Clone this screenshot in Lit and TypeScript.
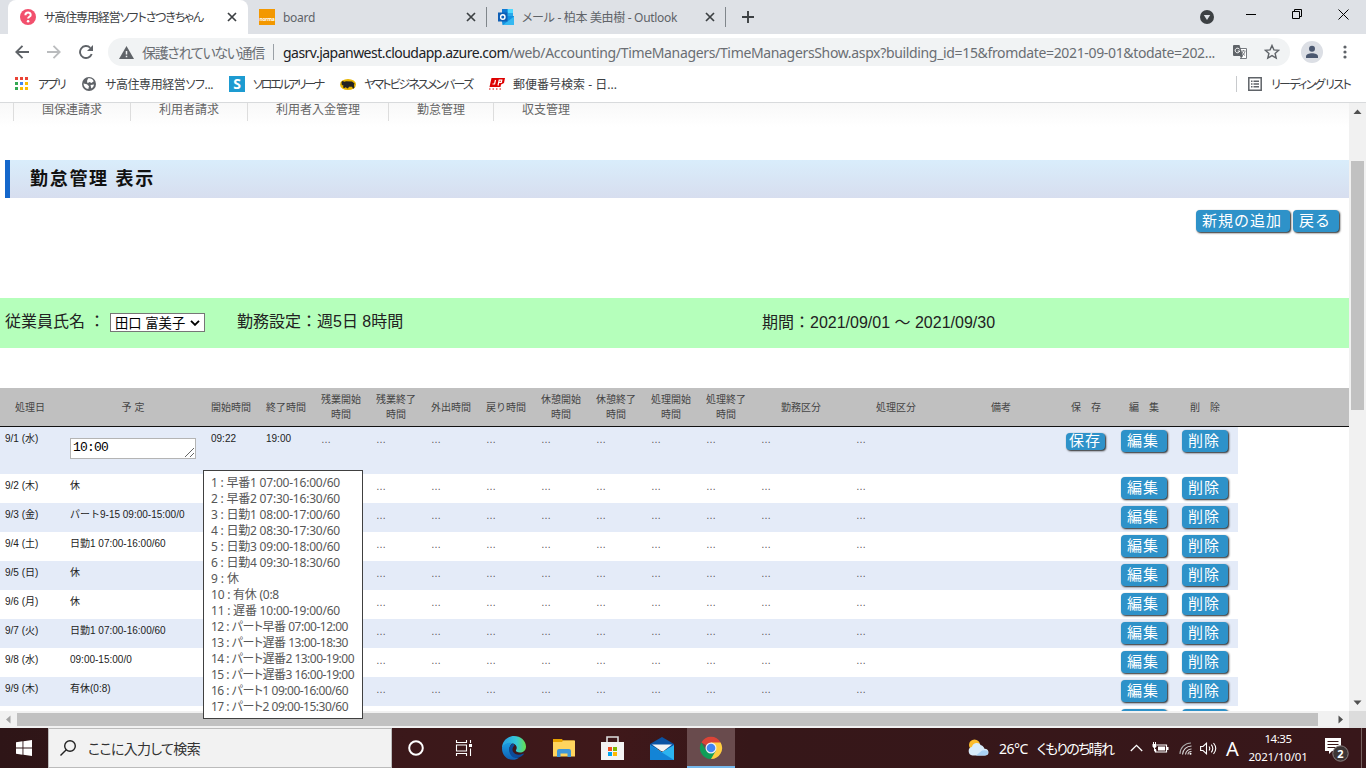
import { css, html, LitElement, svg } from "lit";
import { customElement, property } from "lit/decorators.js";
import { classMap } from "lit/directives/class-map.js";

// Spreads its text over a given width by adjusting the letter spacing.
@customElement("fit-text")
class FitTextElement extends LitElement {
    @property({ type: Number })
    width = 0;

    firstUpdated() {
        const run = this.renderRoot.querySelector(".run")!;
        const natural = run.getBoundingClientRect().width;
        const count = [...(this.textContent ?? "")].length;
        this.style.letterSpacing = `${(this.width - natural) / count}px`;
    }

    render() {
        return html`<span class="run"><slot></slot></span>`;
    }

    static styles = css`
    :host {
        display: inline-block;
        white-space: pre;
        font-feature-settings: "palt";
    }
  `;
}

const closeIcon = html`<svg class="close" width="10" height="10" viewBox="0 0 10 10">
    <path d="M1 1l8 8M9 1l-8 8" stroke="#3c4043" stroke-width="1.7" />
</svg>`;

@customElement("browser-chrome")
class BrowserChromeElement extends LitElement {
    render() {
        return html`
      <div class="tabs">
        <div class="tab active">
            <svg class="favicon" width="16" height="16" viewBox="0 0 16 16">
                <circle cx="8" cy="8" r="8" fill="#f2506d" />
                <path d="M5.4 6.2c0-3.6 5.4-3.4 5.3-.3 0 1.9-2.6 1.9-2.6 3.7" fill="none" stroke="#fff" stroke-width="2" />
                <circle cx="8.1" cy="12.2" r="1.3" fill="#fff" />
            </svg>
            <fit-text class="title dark" width="159">サ高住専用経営ソフトさつきちゃん</fit-text>
            ${closeIcon}
        </div>
        <div class="tab">
            <span class="favicon norma">norma</span>
            <fit-text class="title" width="32">board</fit-text>
            ${closeIcon}
        </div>
        <div class="tab">
            <svg class="favicon" width="16" height="16" viewBox="0 0 16 16">
                <path d="M4 0h11v8H4z" fill="#28a8ea" />
                <path d="M9.5 0H15v4H9.5z" fill="#50d9ff" />
                <path d="M4 0h5.5v4H4z" fill="#0f78d4" />
                <path d="M3 7l13 0v9H4.5z" fill="#1490df" />
                <path d="M16 7.5v8.5H5z" fill="#35b8f1" />
                <path d="M0 3.5h9.5v9H0z" fill="#0f5fb5" />
                <circle cx="4.8" cy="8" r="2.2" fill="none" stroke="#fff" stroke-width="1.4" />
            </svg>
            <fit-text class="title" width="155">メール - 柏本 美由樹 - Outlook</fit-text>
            ${closeIcon}
        </div>
        <svg class="plus" width="12" height="12" viewBox="0 0 12 12">
            <path d="M6 0v12M0 6h12" stroke="#3c4043" stroke-width="1.9" />
        </svg>
        <div class="window">
            <svg width="14" height="14" viewBox="0 0 14 14">
                <circle cx="7" cy="7" r="7" fill="#3c4043" />
                <path d="M3.8 5h6.4L7 10z" fill="#dee1e6" />
            </svg>
            <svg class="minimize" width="10" height="10" viewBox="0 0 10 10"><path d="M0 5.5h10" stroke="#000" /></svg>
            <svg class="restore" width="10" height="10" viewBox="0 0 10 10" fill="none" stroke="#000">
                <path d="M.5 2.500h7v7h-7zM2.5 2.500v-2h7v7h-2" />
            </svg>
            <svg class="quit" width="11" height="11" viewBox="0 0 11 11"><path d="M.5.5l10 10M10.5.5l-10 10" stroke="#000" /></svg>
        </div>
      </div>
      <div class="toolbar">
        <svg class="back" width="14" height="14" viewBox="0 0 14 14" fill="none" stroke="#5f6368" stroke-width="1.9">
            <path d="M14 7H1.5M7.5.8L1.3 7l6.2 6.2" />
        </svg>
        <svg class="forward" width="14" height="14" viewBox="0 0 14 14" fill="none" stroke="#babcbe" stroke-width="1.8">
            <path d="M0 7h12.5M6.5.8L12.7 7l-6.2 6.2" />
        </svg>
        <svg class="reload" width="14" height="14" viewBox="0 0 14 14">
            <path d="M12.7 9A6 6 0 1 1 11.3 2.800" fill="none" stroke="#5f6368" stroke-width="1.9" />
            <path d="M14 0v6H8z" fill="#5f6368" />
        </svg>
        <div class="omnibox">
            <svg class="warning" width="15" height="13" viewBox="0 0 15 13">
                <path d="M7.5 0L15 13H0z" fill="#5f6368" />
                <path d="M7.5 5v3.500M7.5 9.700v1.600" stroke="#f1f3f4" stroke-width="1.5" />
            </svg>
            <fit-text class="insecure" width="122">保護されていない通信</fit-text>
            <span class="divider"></span>
            <div class="url"><fit-text class="host" width="226">gasrv.japanwest.cloudapp.azure.com</fit-text><fit-text width="706">/web/Accounting/TimeManagers/TimeManagersShow.aspx?building_id=15&amp;fromdate=2021-09-01&amp;todate=202...</fit-text></div>
            <svg class="translate" width="14" height="14" viewBox="0 0 14 14">
                <path d="M7 3.500h6.500v10H7" fill="#fff" stroke="#777b80" />
                <path d="M1 0h5.500L10 11H1a1 1 0 0 1-1-1V1a1 1 0 0 1 1-1z" fill="#5f6368" />
                <path d="M6.500 4.400A2.300 2.300 0 1 0 6.700 6H4.700" fill="none" stroke="#fff" stroke-width="1" />
                <path d="M8.500 6h4M10.500 5v1M9 6.500q1 3 3 4M12 6.500q-.6 2.500-2.500 4" fill="none" stroke="#777b80" stroke-width=".9" />
                <path d="M7 11h3l-2 2.500z" fill="#5f6368" />
            </svg>
            <svg class="star" width="16" height="16" viewBox="0 0 16 16">
                <path d="M8 1.500l1.900 4.400 4.800.4-3.600 3.100 1.100 4.700L8 11.600l-4.200 2.500 1.100-4.700-3.600-3.100 4.800-.4z" fill="none" stroke="#5f6368" stroke-width="1.4" />
            </svg>
        </div>
        <svg class="avatar" width="22" height="22" viewBox="0 0 22 22">
            <circle cx="11" cy="11" r="11" fill="#dcdfe5" />
            <circle cx="11" cy="7.8" r="3" fill="#4b5870" />
            <path d="M5 17v-1.500c0-4.200 12-4.200 12 0V17z" fill="#4b5870" />
        </svg>
        <svg class="menu" width="4" height="14" viewBox="0 0 4 14" fill="#5f6368">
            <circle cx="2" cy="2" r="1.6" /><circle cx="2" cy="7" r="1.6" /><circle cx="2" cy="12" r="1.6" />
        </svg>
      </div>
      <div class="bookmarks">
        <svg width="14" height="14" viewBox="0 0 14 14">
            <path d="M0 0h3v3H0zM5 0h3v3H5zM10 0h3v3h-3z" fill="#ea4335" />
            <path d="M0 5h3v3H0zM0 10h3v3H0z" fill="#34a853" />
            <path d="M5 5h3v3H5z" fill="#4285f4" />
            <path d="M10 5h3v3h-3zM5 10h3v3H5zM10 10h3v3h-3z" fill="#fbbc04" />
        </svg>
        <fit-text class="m9" width="27">アプリ</fit-text>
        <svg class="globe" width="14" height="14" viewBox="0 0 14 14">
            <circle cx="7" cy="7" r="7" fill="#5f6368" />
            <path d="M1.500 6.500l3.500.8 2 2-.7 2.700C3.500 11.700 1.500 9.500 1.500 6.500zM6 1.500c2.500-.6 4.800.6 5.700 2.700L9.500 6 7.500 5 5.500 6.200 5 4zM8.500 8l3.500-.5c-.2 1.800-1.200 3.300-2.700 4z" fill="#fff" />
        </svg>
        <fit-text class="m9" width="108">サ高住専用経営ソフ...</fit-text>
        <span class="soloel">S</span>
        <fit-text class="m8" width="70">ソロエルアリーナ</fit-text>
        <svg class="yamato" width="16" height="11" viewBox="0 0 16 11">
            <ellipse cx="8" cy="5.5" rx="8" ry="5.5" fill="#e8b500" />
            <path d="M1.500 3l1-1 2 .8L6 2.200l6 .2 2.600 2-.6 1.600.4 3-1.400.8-1-2H9L8 9.500l-1.500-.4-.5-1L4.500 9 3 8.500l.5-2L1.800 6z" fill="#222" />
        </svg>
        <fit-text class="m8" width="108">ヤマトビジネスメンバーズ</fit-text>
        <svg class="jp" width="16" height="12" viewBox="0 0 16 12">
            <path d="M2.500 0H16l-1 5-3 1.600-.5 2.400H.5z" fill="#d00" />
            <path d="M6.500 2L5.600 6H3.500M9 7.500l1.200-5.300h2.600l-.5 2.200H10" fill="none" stroke="#fff" stroke-width="1.2" />
            <path d="M0 11h14" stroke="#d00" stroke-dasharray="1.5 2" />
        </svg>
        <fit-text class="m8" width="104">郵便番号検索 - 日...</fit-text>
        <span class="bar"></span>
        <svg class="list" width="14" height="14" viewBox="0 0 14 14">
            <path d="M.8.8h12.400v12.400H.8z" fill="none" stroke="#5f6368" stroke-width="1.5" />
            <path d="M3 4.300h1.500M5.500 4.300H11M3 7h1.500M5.500 7H11M3 9.700h1.500M5.500 9.700H11" stroke="#5f6368" stroke-width="1.4" />
        </svg>
        <fit-text class="m9" width="79">リーディング リスト</fit-text>
      </div>
    `;
    }

    static styles = css`
    :host {
        display: block;
        height: 103px;
        font: 12px "Noto Sans", "Noto Sans CJK JP", sans-serif;
        color: #3c4043;
    }
    svg, span {
        flex: none;
    }
    .tabs {
        display: flex;
        height: 34px;
        padding-left: 8px;
        background: #dee1e6;
    }
    .tab {
        box-sizing: border-box;
        display: flex;
        align-items: center;
        width: 239px;
        padding: 0 11px;
        background: linear-gradient(#80868b, #80868b) 100% 50% / 1px 20px no-repeat;
    }
    .tab.active {
        width: 240px;
        padding-left: 12px;
        background: #fff;
        border-radius: 8px 8px 0 0;
    }
    .title {
        margin-left: 8px;
        color: #5f6368;
    }
    .title.dark {
        color: #3c4043;
    }
    .close {
        margin-left: auto;
    }
    .norma {
        width: 16px;
        height: 16px;
        background: #f39800;
        color: #fff;
        font: bold 5px/20px "Noto Sans", sans-serif;
        letter-spacing: -0.3px;
        text-align: center;
    }
    .plus {
        margin: 11px 0 0 16px;
    }
    .window {
        display: flex;
        margin: 10px 17px 0 auto;
    }
    .minimize {
        margin: -1px 0 0 32px;
    }
    .restore, .quit {
        margin: -1px 0 0 36px;
    }
    .toolbar {
        display: flex;
        align-items: center;
        height: 36px;
        padding-left: 15px;
        background: #fff;
    }
    .forward, .reload {
        margin-left: 18px;
    }
    .omnibox {
        display: flex;
        align-items: center;
        box-sizing: border-box;
        width: 1182px;
        height: 28px;
        margin-left: 15px;
        padding-left: 11px;
        border-radius: 14px;
        background: #f1f3f4;
        font-size: 14px;
        color: #6a6e73;
    }
    .insecure {
        margin-left: 8px;
    }
    .divider {
        width: 1px;
        height: 16px;
        margin: 0 9px;
        background: #9aa0a6;
    }
    .url {
        width: 933px;
        white-space: nowrap;
    }
    .host {
        color: #202124;
    }
    .translate {
        margin-left: 17px;
    }
    .star {
        margin-left: 17px;
    }
    .avatar {
        margin-left: 11px;
    }
    .menu {
        margin-left: 20px;
    }
    .bookmarks {
        display: flex;
        align-items: center;
        box-sizing: border-box;
        height: 33px;
        padding: 0 0 4px 15px;
        background: #fff;
        border-bottom: 1px solid #d8dadc;
    }
    .m9 {
        margin-left: 9px;
    }
    .m8 {
        margin-left: 8px;
    }
    .globe {
        margin-left: 17px;
    }
    .soloel {
        width: 16px;
        height: 16px;
        margin-left: 16px;
        background: #1d9bd1;
        color: #fff;
        font: bold 14px/16px "Noto Sans", sans-serif;
        text-align: center;
    }
    .yamato, .jp {
        margin-left: 17px;
    }
    .bar {
        width: 1px;
        height: 16px;
        margin-left: auto;
        background: #c8cacd;
    }
    .list {
        margin-left: 11px;
    }
    .bookmarks > :last-child {
        margin-right: 16px;
    }
  `;
}

const columns = [
    "処理日", "予 定", "開始時間", "終了時間", "残業開始時間", "残業終了時間", "外出時間", "戻り時間",
    "休憩開始時間", "休憩終了時間", "処理開始時間", "処理終了時間", "勤務区分", "処理区分", "備考",
    "保　存", "編　集", "削　除",
];

const days = [
    { date: "9/1 (水)", plan: "10:00", start: "09:22", end: "19:00", overtime: "…", editing: true },
    { date: "9/2 (木)", plan: "休" },
    { date: "9/3 (金)", plan: "パート9-15 09:00-15:00/0" },
    { date: "9/4 (土)", plan: "日勤1 07:00-16:00/60" },
    { date: "9/5 (日)", plan: "休" },
    { date: "9/6 (月)", plan: "休" },
    { date: "9/7 (火)", plan: "日勤1 07:00-16:00/60" },
    { date: "9/8 (水)", plan: "09:00-15:00/0" },
    { date: "9/9 (木)", plan: "有休(0:8)" },
];

// Shift codes with the width each line takes.
const shifts: [string, number][] = [
    ["1 : 早番1 07:00-16:00/60", 129],
    ["2 : 早番2 07:30-16:30/60", 129],
    ["3 : 日勤1 08:00-17:00/60", 129],
    ["4 : 日勤2 08:30-17:30/60", 129],
    ["5 : 日勤3 09:00-18:00/60", 129],
    ["6 : 日勤4 09:30-18:30/60", 129],
    ["9 : 休", 28],
    ["10 : 有休 (0:8", 68],
    ["11 : 遅番 10:00-19:00/60", 129],
    ["12 : パート早番 07:00-12:00", 137],
    ["13 : パート遅番 13:00-18:30", 137],
    ["14 : パート遅番2 13:00-19:00", 143],
    ["15 : パート遅番3 16:00-19:00", 143],
    ["16 : パート1 09:00-16:00/60", 137],
    ["17 : パート2 09:00-15:30/60", 137],
];

@customElement("time-manager")
class TimeManagerElement extends LitElement {
    renderDay(day: any) {
        const dots = Array.from({ length: 9 }, () => html`<span class="dots">…</span>`);
        return html`
      <div class=${classMap({ row: true, editing: !!day.editing })}>
        <span>${day.date}</span>
        ${day.editing
                ? html`<span class="input">${day.plan}<svg width="9" height="9" viewBox="0 0 9 9"><path d="M0 9l9-9M5 9l4-4" stroke="#666" /></svg></span>`
                : html`<span>${day.plan}</span>`}
        <span>${day.start}</span>
        <span>${day.end}</span>
        <span class="dots">${day.overtime}</span>
        ${dots}
        <span></span>
        ${day.editing ? html`<a class="button save">保存</a>` : html`<span></span>`}
        <a class="button">編集</a>
        <a class="button">削除</a>
      </div>
    `;
    }

    render() {
        return html`
      <div class="page">
        <nav>
            ${["国保連請求", "利用者請求", "利用者入金管理", "勤怠管理", "収支管理"].map(item => html`<a>${item}</a>`)}
        </nav>
        <h1>勤怠管理 表示</h1>
        <div class="actions">
            <a class="button">新規の追加</a>
            <a class="button">戻る</a>
        </div>
        <div class="employee">
            <span class="label">従業員氏名</span>
            <span class="colon">：</span>
            <span class="select">田口 富美子<svg width="10" height="6" viewBox="0 0 10 6"><path d="M1 .8l4 4 4-4" fill="none" stroke="#000" stroke-width="1.9" /></svg></span>
            <span class="setting">勤務設定：週5日 8時間</span>
            <span class="period">期間：2021/09/01 ～ 2021/09/30</span>
        </div>
        <div class="head">${columns.map(name => html`<span>${name}</span>`)}</div>
        <div class="rows">
            ${days.map(day => this.renderDay(day))}
            <div class="row next">
                <a class="button"></a>
                <a class="button"></a>
            </div>
        </div>
      </div>
      <div class="vertical">
        <svg width="17" height="17" viewBox="0 0 17 17"><path d="M4.500 11l4-4.500 4 4.500z" fill="#505050" /></svg>
        <div class="thumb"></div>
        <svg class="down" width="17" height="17" viewBox="0 0 17 17"><path d="M4.500 6.500l4 4.500 4-4.500z" fill="#505050" /></svg>
      </div>
      <div class="horizontal">
        <svg width="17" height="17" viewBox="0 0 17 17"><path d="M10.500 4.500l-4.500 4 4.500 4z" fill="#a3a3a3" /></svg>
        <div class="thumb"></div>
        <svg width="17" height="17" viewBox="0 0 17 17"><path d="M6.500 4.500l4.500 4-4.500 4z" fill="#505050" /></svg>
      </div>
      <div class="corner"></div>
      <div class="tooltip">${shifts.map(([text, width]) => html`<fit-text width=${width}>${text}</fit-text>`)}</div>
    `;
    }

    static styles = css`
    :host {
        position: relative;
        display: grid;
        grid-template: 608px 17px / 1349px 17px;
        color: #222;
        font: 10px "Liberation Sans", "Noto Sans CJK JP", sans-serif;
    }
    .page {
        overflow: hidden;
        background: #fff;
    }
    nav {
        display: flex;
        box-sizing: border-box;
        height: 57px;
        padding-left: 13px;
        background: linear-gradient(#f8f8f8, #fff 24px);
        font-size: 12px;
        line-height: 14px;
        color: #666;
    }
    nav a {
        height: 18px;
        padding: 0 28px;
        border-left: 1px solid #ddd;
    }
    h1 {
        box-sizing: border-box;
        height: 38px;
        margin: 0 0 0 5px;
        padding-left: 20px;
        border-left: 5px solid #1467cb;
        background: linear-gradient(#d9edfb, #d7deef);
        font: bold 18px/39px "Liberation Sans", "Noto Sans CJK JP", sans-serif;
        letter-spacing: 1.7px;
        color: #111;
    }
    .actions {
        display: flex;
        justify-content: flex-end;
        gap: 3px;
        height: 88px;
        padding: 12px 10px 0 0;
    }
    .button {
        box-sizing: border-box;
        width: fit-content;
        height: 22px;
        padding: 0 8px 0 6px;
        border-radius: 4px;
        background: #2e92c9;
        box-shadow: 1px 1px 2px #222;
        color: #fff;
        font: 15px/20px "Noto Sans CJK JP", sans-serif;
        letter-spacing: 1px;
        white-space: nowrap;
    }
    .button.save {
        height: 17px;
        margin: 3px 0 0 5px;
        padding: 0 4px 0 3px;
        line-height: 14px;
    }
    .employee {
        display: flex;
        align-items: center;
        box-sizing: border-box;
        height: 50px;
        margin-bottom: 40px;
        padding: 0 0 6px 5px;
        background: #b5ffbb;
        font-size: 16px;
    }
    .label {
        width: 84px;
    }
    .colon {
        width: 21px;
    }
    .select {
        display: flex;
        align-items: center;
        box-sizing: border-box;
        width: 95px;
        height: 19px;
        margin-top: 5px;
        padding-left: 4px;
        border: 1px solid #767676;
        background: #fff;
        color: #000;
        font-size: 13.3px;
        white-space: nowrap;
    }
    .select svg {
        margin-left: 5px;
    }
    .setting {
        width: 167px;
        margin-left: 32px;
        white-space: nowrap;
    }
    .period {
        margin-left: 358px;
        margin-top: 2px;
        white-space: nowrap;
    }
    .head, .row {
        display: grid;
        grid-template-columns: 60px 136px repeat(10, 50px) 90px 90px 110px 50px 56px 56px;
        column-gap: 5px;
    }
    .head {
        align-items: center;
        box-sizing: border-box;
        height: 39px;
        border-bottom: 1px solid #111;
        background: #c0c0c0;
        color: #444;
        line-height: 15px;
        text-align: center;
    }
    .head span {
        padding: 0 5px;
    }
    .row {
        box-sizing: border-box;
        width: 1238px;
        height: 29px;
        padding-top: 3px;
        line-height: 18px;
    }
    .row.editing {
        height: 47px;
    }
    .row:nth-child(odd) {
        background: #e4ebf8;
    }
    .row > span {
        padding-left: 5px;
        white-space: nowrap;
    }
    .row > .dots {
        padding-top: 1px;
        color: #555;
    }
    .row > .button {
        margin-left: 5px;
    }
    .row.next > .button {
        grid-column: 17;
        width: 46px;
    }
    .row.next > .button + .button {
        grid-column: 18;
    }
    .row > .input {
        display: flex;
        justify-content: space-between;
        align-items: flex-end;
        box-sizing: border-box;
        width: 126px;
        height: 21px;
        margin: 8px 0 0 5px;
        padding: 0 1px 1px 2px;
        border: 1px solid #b4b4b4;
        background: #fff;
        color: #000;
        font: 13px/18px "Liberation Mono", monospace;
        letter-spacing: -0.8px;
    }
    .vertical {
        display: flex;
        flex-direction: column;
        background: #f1f1f1;
    }
    .vertical .thumb {
        width: 13px;
        height: 249px;
        margin: 41px 0 0 2px;
        background: #c1c1c1;
    }
    .vertical .down {
        margin-top: auto;
    }
    .horizontal {
        display: flex;
        background: #f1f1f1;
    }
    .horizontal .thumb {
        width: 1301px;
        height: 13px;
        margin: 2px 14px 0 0;
        background: #c1c1c1;
    }
    .corner {
        background: #dcdcdc;
    }
    .tooltip {
        position: absolute;
        left: 203px;
        top: 367px;
        display: flex;
        flex-direction: column;
        box-sizing: border-box;
        width: 160px;
        height: 249px;
        padding: 4px 7px;
        border: 1px solid #404040;
        background: #fff;
        color: #575757;
        font: 12px/16px "Noto Sans", "Noto Sans CJK JP", sans-serif;
    }
    .tooltip fit-text {
        align-self: flex-start;
        height: 16px;
    }
  `;
}

const chromeSectors = svg`
    <path d="M12 12L2.400 6.500A11 11 0 0 1 21.600 6.500z" fill="#db4437" />
    <path d="M12 12V6.500h9.600A11 11 0 0 1 12 23z" fill="#ffcd40" />
    <path d="M12 12l4.800 2.800L12 23A11 11 0 0 1 2.400 6.500L7.200 14.800z" fill="#0f9d58" />
    <circle cx="12" cy="12" r="5.5" fill="#f1f1f1" />
    <circle cx="12" cy="12" r="4.3" fill="#4285f4" />`;

@customElement("task-bar")
class TaskBarElement extends LitElement {
    render() {
        return html`
      <div class="app start">
        <svg width="16" height="16" viewBox="0 0 16 16" fill="#fff">
            <path d="M0 2.200l6.500-.9v6.300H0zM7.400 1.200L16 0v7.600H7.400zM0 8.500h6.500v6.200L0 13.800zM7.400 8.500H16V16l-8.600-1.200z" />
        </svg>
      </div>
      <div class="search">
        <svg width="16" height="16" viewBox="0 0 16 16" fill="none" stroke="#222" stroke-width="1.4">
            <circle cx="10" cy="6" r="5.3" /><path d="M6.300 9.700L.5 15.500" />
        </svg>
        <fit-text width="112">ここに入力して検索</fit-text>
      </div>
      <div class="app">
        <svg width="16" height="16" viewBox="0 0 16 16"><circle cx="8" cy="8" r="6.8" fill="none" stroke="#fff" stroke-width="2" /></svg>
      </div>
      <div class="app">
        <svg class="view" width="18" height="16" viewBox="0 0 18 16" fill="none" stroke="#fff" stroke-width="1.1">
            <path d="M1.500 0v2.500h10V0M1.500 5h10v6h-10zM1.500 16v-2.500h10V16M15.500 0v3M15.500 8.500V16" />
            <path d="M14 4h3v3h-3z" fill="#fff" stroke="none" />
        </svg>
      </div>
      <div class="app">
        <svg width="24" height="24" viewBox="0 0 24 24">
            <defs>
                <linearGradient id="top" x1="0" x2="1"><stop offset=".2" stop-color="#2ba8e0" /><stop offset=".6" stop-color="#36c8d8" /><stop offset="1" stop-color="#66e04c" /></linearGradient>
                <linearGradient id="side" x2="0" y2="1"><stop stop-color="#1b9de2" /><stop offset="1" stop-color="#0f5fb4" /></linearGradient>
            </defs>
            <path d="M0 12C0 5 5.500 0 12 0s12 4.800 12 10.500c0 4-3 6-6 6-3.500 0-4.500-1.500-4-2.500 1.500-2 .8-5.500-3-6.500C7 6.500 2 8 0 12z" fill="url(#top)" />
            <path d="M0 12C1 8 7 5.500 11 7.500c-3 1-4 4-3.500 7C8.300 19 12 22 17 21.800 12 26 0 24 0 12z" fill="url(#side)" />
            <path d="M11 7.500c-4 2-5.500 8-1.500 12.500 2.500 3 8.500 2.500 12-1.500.6-.7 0-1.200-.7-.8-6 2.800-10.800-.7-10.300-4.700.2-1.500 1-2.500 1.800-3.200.4-1-.3-2-1.300-2.300z" fill="#0c4a9a" />
        </svg>
      </div>
      <div class="app">
        <svg width="22" height="18" viewBox="0 0 22 18">
            <path d="M0 0h9l1 1.500h11V5H0z" fill="#e8a200" />
            <path d="M0 3h9l1-1.500h12V17.500H0z" fill="#ffd45e" />
            <path d="M4 18v-6q0-2 2-2h10q2 0 2 2v6h-3.500v-3.500h-7V18z" fill="#3f97d8" />
        </svg>
      </div>
      <div class="app">
        <svg width="23" height="24" viewBox="0 0 23 24">
            <path d="M6 7V1h11v6" fill="none" stroke="#ddd" stroke-width="1.6" />
            <path d="M0 6h23v18H0z" fill="#f4f4f4" />
            <path d="M7 11h4v4H7z" fill="#f25022" /><path d="M12 11h4v4h-4z" fill="#7fba00" />
            <path d="M7 16h4v4H7z" fill="#00a4ef" /><path d="M12 16h4v4h-4z" fill="#ffb900" />
        </svg>
      </div>
      <div class="app">
        <svg width="24" height="23" viewBox="0 0 24 23">
            <path d="M0 7l12-7 12 7v5H0z" fill="#0a53a3" />
            <path d="M0 8l12 7 12-7v15H0z" fill="#2cb4f0" />
            <path d="M0 8l24 15H0z" fill="#1384d6" />
            <path d="M2 7.500h20L13 14.500 11 14z" fill="#f2f4f6" />
        </svg>
      </div>
      <div class="app current"><svg width="24" height="24" viewBox="0 0 24 24">${chromeSectors}</svg></div>
      <div class="tray">
        <svg class="weather" width="21" height="19" viewBox="0 0 21 19">
            <circle cx="6.5" cy="6" r="5.5" fill="#fbbc2c" />
            <path d="M4.500 16.500a4.500 4.500 0 0 1-.5-8.800 5 5 0 0 1 9-1.500q2 0 3.500 3.500 4 0 4 3.800 0 3-4 3z" fill="#d9ecfb" />
            <path d="M8 16.500l6-5q6-1 6 2t-3.500 3z" fill="#a9d2f5" />
        </svg>
        <fit-text class="degrees" width="29">26°C</fit-text>
        <fit-text class="forecast" width="76">くもりのち晴れ</fit-text>
        <svg class="chevron" width="13" height="8" viewBox="0 0 13 8"><path d="M.8 7l5.700-5.700L12.200 7" fill="none" stroke="#fff" stroke-width="1.3" /></svg>
        <svg class="battery" width="17" height="12" viewBox="0 0 17 12">
            <path d="M5 3h9.500v7H3.500V7" fill="none" stroke="#fff" stroke-width="1.2" />
            <path d="M6 4.500h7v4H6zM15 5h1.500v3H15zM.5 2h4v2.500L3.200 6H1.800L.5 4.500z" fill="#fff" />
            <path d="M1.500 0v2M3.500 0v2M2.500 6v3h2" fill="none" stroke="#fff" />
        </svg>
        <svg class="wifi" width="13" height="13" viewBox="0 0 13 13" fill="none" stroke="#ddd" stroke-width="1.1">
            <path d="M1 12A11 11 0 0 1 12 1" stroke="#aaa" /><path d="M3.500 12.500A9 9 0 0 1 12.500 4M6.500 12.500a6 6 0 0 1 6-5.500" /><path d="M9 12.500a3 3 0 0 1 3.500-3" />
            <circle cx="11.5" cy="11.8" r="1" fill="#fff" stroke="none" />
        </svg>
        <svg class="volume" width="17" height="13" viewBox="0 0 17 13" fill="none" stroke="#fff" stroke-width="1.1">
            <path d="M.6 4.500H3L6.500 1.200v10.600L3 8.500H.6zM9 4.500q1.500 2 0 4M11.300 2.700q3 3.800 0 7.600M13.500 1q4.500 5.500 0 11" />
        </svg>
        <span class="ime">A</span>
        <div class="clock"><fit-text width="27">14:35</fit-text><fit-text width="59">2021/10/01</fit-text></div>
        <svg class="notice" width="26" height="26" viewBox="0 0 26 26">
            <path d="M0 0h16v13h-9l-3 3v-3H0z" fill="#fff" />
            <path d="M2.500 3.500h11M2.500 6.500h11M2.500 9.500h8" stroke="#3a1718" />
            <circle cx="15.5" cy="15.5" r="7.7" fill="#3d3535" stroke="#8a8080" />
            <text class="badge" x="15.5" y="19.5" text-anchor="middle" fill="#fff">2</text>
        </svg>
        <span class="peek"></span>
      </div>
    `;
    }

    static styles = css`
    :host {
        display: flex;
        height: 40px;
        background: linear-gradient(90deg, #2e1517, #3b181a 30%, #3f181a 45%, #361719 55%, #38171a);
        color: #fff;
        font: 14px "Noto Sans", "Noto Sans CJK JP", sans-serif;
    }
    svg {
        flex: none;
    }
    .app {
        display: flex;
        align-items: center;
        justify-content: center;
        box-sizing: border-box;
        width: 48px;
        margin-right: 1.2px;
    }
    .app.start {
        margin: 0;
    }
    .app.current {
        background: #694b4d;
        border-bottom: 2px solid #76b9ed;
        border-top: 2px solid #694b4d;
    }
    .view {
        margin-right: 2px;
    }
    .search {
        display: flex;
        align-items: center;
        gap: 12px;
        box-sizing: border-box;
        width: 344px;
        padding-left: 11px;
        border: 1px solid #bbb;
        background: #f2f2f2;
        color: #333;
    }
    .tray {
        display: flex;
        align-items: center;
        margin-left: auto;
    }
    .degrees {
        width: 29px;
        margin-left: 10px;
    }
    .forecast {
        width: 77px;
        margin-left: 9px;
    }
    .chevron {
        margin-left: 16px;
    }
    .battery {
        margin-left: 9px;
    }
    .wifi {
        margin-left: 10px;
    }
    .volume {
        margin-left: 8px;
    }
    .ime {
        width: 14px;
        margin-left: 9px;
        font: 20px "Noto Sans", sans-serif;
    }
    .clock {
        display: flex;
        flex-direction: column;
        align-items: center;
        width: 60px;
        margin-left: 8px;
        font-size: 11.5px;
        line-height: 18px;
    }
    .notice {
        margin: 6px 0 0 17px;
    }
    .badge {
        font: bold 11px "Noto Sans", sans-serif;
    }
    .peek {
        width: 1px;
        height: 40px;
        margin: 0 4px 0 10px;
        background: #75605f;
    }
  `;
}

@customElement("app-root")
class AppRootElement extends LitElement {
    render() {
        return html`
      <browser-chrome></browser-chrome>
      <time-manager></time-manager>
      <task-bar></task-bar>
    `;
    }

    static styles = css`
    :host {
        display: block;
        width: 1366px;
        height: 768px;
        overflow: hidden;
        background: #fff;
    }
  `;
}
